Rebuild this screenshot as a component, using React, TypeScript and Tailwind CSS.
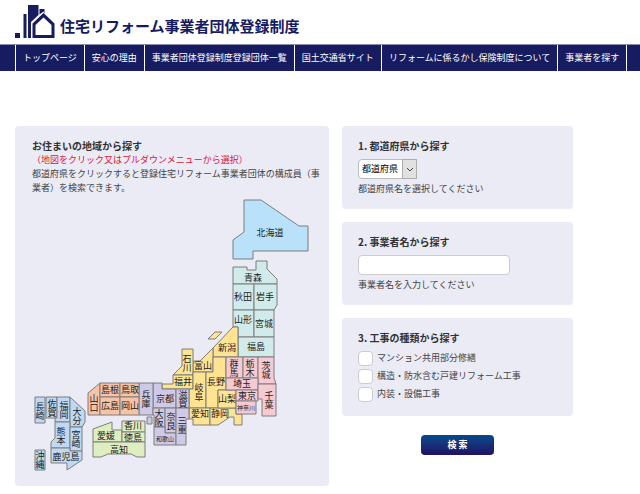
import React, { useState } from "react";

interface Prefecture {
  name: string
  points: string
  fill: string
  x: number
  y: number
  vertical?: boolean
  small?: boolean
}

const BLUE = "#b9e2fa";
const GREEN = "#d0ebea";
const YELLOW = "#fee492";
const PINK = "#f6cad3";
const PURPLE = "#cdc9e6";
const ORANGE = "#f7c3a6";
const LIME = "#dfeec0";
const SKY = "#bfd9f2";

// x, y is the middle of the label
const prefectures: Prefecture[] = [
  { name: "北海道", fill: BLUE, x: 270, y: 233, points: "244,200 261,200 299,226 308,226 308,251 253,251 253,259 233,259 233,240 244,232" },
  { name: "青森", fill: GREEN, x: 253, y: 278, points: "233,267 247,267 247,270 256,270 256,261 267,261 267,269 277,279 277,284 233,284" },
  { name: "秋田", fill: GREEN, x: 243, y: 297, points: "233,284 254,284 254,310 233,310" },
  { name: "岩手", fill: GREEN, x: 265, y: 297, points: "254,284 277,284 277,305 274,310 254,310" },
  { name: "山形", fill: GREEN, x: 243, y: 320, points: "233,310 254,310 254,337 238,337 238,327 233,327" },
  { name: "宮城", fill: GREEN, x: 264, y: 324, points: "254,310 274,310 274,337 254,337" },
  { name: "福島", fill: GREEN, x: 256, y: 347, points: "238,337 274,337 274,357 238,357" },
  { name: "", fill: YELLOW, x: 0, y: 0, points: "208,339 215,332 222,332 215,339" },
  { name: "新潟", fill: YELLOW, x: 227, y: 348, points: "233,327 238,327 238,357 213,357 213,348" },
  { name: "富山", fill: YELLOW, x: 203, y: 366, points: "213,348 200,361 193,361 193,372 213,372" },
  { name: "石川", fill: YELLOW, x: 187, y: 363, vertical: true, points: "182,349 193,349 193,375 173,375 182,366" },
  { name: "福井", fill: YELLOW, x: 183, y: 382, points: "173,375 193,375 193,389 162,389 162,384 173,384" },
  { name: "岐阜", fill: YELLOW, x: 199, y: 392, vertical: true, points: "193,372 206,372 206,408 189,408 189,389 193,389" },
  { name: "長野", fill: YELLOW, x: 216, y: 382, points: "213,357 226,357 226,390 218,390 218,408 206,408 206,372 213,372" },
  { name: "愛知", fill: YELLOW, x: 200, y: 414, points: "189,408 210,408 210,425 193,425 193,419 189,419" },
  { name: "静岡", fill: YELLOW, x: 220, y: 414, points: "210,408 236,408 236,414 242,414 242,425 234,425 234,417 230,417 218,425 210,425" },
  { name: "山梨", fill: YELLOW, x: 227, y: 399, points: "218,390 236,390 236,408 218,408" },
  { name: "群馬", fill: PINK, x: 234, y: 368, vertical: true, points: "226,357 243,357 243,378 226,378" },
  { name: "栃木", fill: PINK, x: 250, y: 368, vertical: true, points: "243,357 258,357 258,378 243,378" },
  { name: "茨城", fill: PINK, x: 266, y: 370, vertical: true, points: "258,357 274,357 274,378 276,384 258,384" },
  { name: "埼玉", fill: PINK, x: 242, y: 384, points: "226,378 258,378 258,390 226,390" },
  { name: "東京", fill: PINK, x: 247, y: 396, points: "236,390 258,390 258,401 236,401" },
  { name: "神奈川", fill: PINK, x: 246, y: 408, small: true, points: "236,401 256,401 256,414 236,414" },
  { name: "千葉", fill: PINK, x: 269, y: 400, vertical: true, points: "258,384 276,384 276,416 262,416 262,399 258,399" },
  { name: "京都", fill: PURPLE, x: 165, y: 399, points: "153,383 162,383 162,389 176,389 176,408 153,408" },
  { name: "滋賀", fill: PURPLE, x: 183, y: 399, vertical: true, points: "176,389 189,389 189,408 176,408" },
  { name: "兵庫", fill: PURPLE, x: 146, y: 399, vertical: true, points: "139,383 153,383 153,415 139,415" },
  { name: "大阪", fill: PURPLE, x: 159, y: 418, vertical: true, points: "153,408 165,408 165,427 154,427 154,415 153,415" },
  { name: "奈良", fill: PURPLE, x: 171, y: 421, vertical: true, points: "165,408 176,408 176,433 165,433" },
  { name: "和歌山", fill: PURPLE, x: 165, y: 439, small: true, points: "154,427 165,427 165,433 176,433 176,445 154,445" },
  { name: "三重", fill: PURPLE, x: 182, y: 425, vertical: true, points: "176,408 189,408 189,419 186,419 186,445 176,445" },
  { name: "", fill: PURPLE, x: 0, y: 0, points: "147,417 152,417 152,424 147,424" },
  { name: "山口", fill: ORANGE, x: 94, y: 403, vertical: true, points: "100,383 100,415 88,415 88,393" },
  { name: "島根", fill: ORANGE, x: 110, y: 390, points: "100,383 120,383 120,397 100,397" },
  { name: "鳥取", fill: ORANGE, x: 130, y: 390, points: "120,383 139,383 139,397 120,397" },
  { name: "広島", fill: ORANGE, x: 110, y: 406, points: "100,397 120,397 120,415 100,415" },
  { name: "岡山", fill: ORANGE, x: 130, y: 406, points: "120,397 139,397 139,415 120,415" },
  { name: "愛媛", fill: LIME, x: 106, y: 436, points: "93,429 112,422 112,430 122,430 122,442 93,442" },
  { name: "香川", fill: LIME, x: 133, y: 426, points: "122,421 145,421 145,432 122,432" },
  { name: "徳島", fill: LIME, x: 133, y: 438, points: "122,432 145,432 145,442 122,442" },
  { name: "高知", fill: LIME, x: 119, y: 450, points: "93,442 145,442 145,457 137,457 131,454 108,454 101,457 93,457" },
  { name: "長崎", fill: SKY, x: 40, y: 411, vertical: true, points: "35,397 45,397 45,423 35,423" },
  { name: "佐賀", fill: SKY, x: 52, y: 408, vertical: true, points: "46,397 57,397 57,418 46,418" },
  { name: "福岡", fill: SKY, x: 64, y: 410, vertical: true, points: "57,397 70,397 70,422 55,422 55,418 57,418" },
  { name: "大分", fill: SKY, x: 77, y: 416, vertical: true, points: "70,397 85,411 85,422 82,427 70,427" },
  { name: "熊本", fill: SKY, x: 61, y: 436, vertical: true, points: "55,422 70,422 70,448 51,448 51,442 55,438" },
  { name: "宮崎", fill: SKY, x: 76, y: 439, vertical: true, points: "70,427 82,427 82,451 70,451" },
  { name: "鹿児島", fill: SKY, x: 66, y: 457, points: "51,448 70,448 70,451 82,451 82,460 67,470 67,463 51,463" },
  { name: "沖縄", fill: SKY, x: 40, y: 460, vertical: true, points: "35,450 45,450 45,470 35,470" },
];

const menus = ["トップページ", "安心の理由", "事業者団体登録制度登録団体一覧", "国土交通省サイト", "リフォームに係るかし保険制度について", "事業者を探す"];

const works = ["マンション共用部分修繕", "構造・防水含む戸建リフォーム工事", "内装・設備工事"];

const Logo = () => {
  return <svg className="h-10 w-10 shrink-0" viewBox="0 0 40 40" fill="#171b5f">
    <rect x="0" y="33" width="5" height="5" />
    <rect x="8.5" y="14" width="3" height="24" />
    <path d="M13 5H23.5V15L16 22V38H13Z" />
    <path d="M24.5 9H29.5V14L28.5 11.5L24.5 14.5Z" />
    <path fillRule="evenodd" d="M28.5 13L39.5 23.5V38H17.5V23.5ZM28.5 17.5L20.5 25V35H36.5V25Z" />
  </svg>
}

const PrefectureShape = ({ pref, onPick }: { pref: Prefecture, onPick: (name: string) => void }) => {
  const shape = <polygon points={pref.points} fill={pref.fill} stroke="#7d7d7d" strokeWidth="1" />;
  if (!pref.name) {
    return shape
  }
  return <a href="#search" onClick={() => onPick(pref.name)}>
    {shape}
    {pref.vertical ? (
      <text className="[writing-mode:vertical-rl]" x={pref.x} y={pref.y} textAnchor="middle" dominantBaseline="central" fontSize="9">{pref.name}</text>
    ) : (
      <text x={pref.x} y={pref.y + (pref.small ? 2 : 3)} textAnchor="middle" fontSize={pref.small ? 6 : 9}>{pref.name}</text>
    )}
  </a>
}

const JapanMap = ({ onPick }: { onPick: (name: string) => void }) => {
  return <svg className="w-full" viewBox="32 195 280 278" fill="#222222" role="group">
    {prefectures.map((pref) => <PrefectureShape key={pref.points} pref={pref} onPick={onPick} />)}
  </svg>
}

export default function App() {
  const [area, setArea] = useState("");
  const [company, setCompany] = useState("");

  return <div className="min-h-screen overflow-x-hidden bg-white text-[9px] leading-[14px] text-[#444444] font-['Noto_Sans_CJK_JP',sans-serif]">
    <header className="flex h-11 items-start gap-[5px] pl-[15px]">
      <Logo />
      <h1 className="pt-3 text-[15px] font-bold leading-7 whitespace-nowrap text-[#171b5f]">住宅リフォーム事業者団体登録制度</h1>
    </header>
    <nav className="flex h-[27px] border-t border-[#8a8cb0] bg-[#171b5f] pl-[15px] whitespace-nowrap text-white">
      {menus.map((menu) => (
        <a key={menu} href="#" className="flex items-center border-l border-white px-[7px]">{menu}</a>
      ))}
      <span className="border-l border-white"></span>
    </nav>

    <form className="grid grid-cols-[314fr_231fr] items-start gap-[13px] pt-[55px] pr-[67px] pl-[15px]" onSubmit={(e) => e.preventDefault()}>
      <section className="min-w-0 rounded bg-[#ebebf6] py-[13px] pr-2 pl-[17px]">
        <h2 className="text-[10px] font-bold leading-[14px] text-[#333333]">お住まいの地域から探す</h2>
        <p className="text-[#dc143c]">（地図をクリック又はプルダウンメニューから選択）</p>
        <p>都道府県をクリックすると登録住宅リフォーム事業者団体の構成員（事業者）を検索できます。</p>
        <div className="pr-[9px]">
          <JapanMap onPick={setArea} />
        </div>
      </section>

      <div id="search" className="flex min-w-0 flex-col gap-[13px]">
        <section className="rounded bg-[#ebebf6] px-4 py-[13px]">
          <h2 className="text-[10px] font-bold leading-[14px] text-[#333333]">1. 都道府県から探す</h2>
          <div className="relative mt-[6px] w-[59px]">
            <select id="area" value={area} onChange={(e) => setArea(e.target.value)} className="block h-5 w-full appearance-none rounded-sm border border-[#bbbbbb] bg-white pl-[3px] text-[9px] text-black">
              <option value="">都道府県</option>
              {prefectures.filter((p) => p.name).map((p) => <option key={p.name} value={p.name}>{p.name}</option>)}
            </select>
            <span className="pointer-events-none absolute top-0 right-0 flex h-5 w-[15px] items-center justify-center border border-[#adadad] bg-[#e1e1e1]">
              <svg className="w-2" viewBox="0 0 8 5" fill="none" stroke="#444444"><path d="M1 1L4 4L7 1" /></svg>
            </span>
          </div>
          <label htmlFor="area" className="mt-[3px] block">都道府県名を選択してください</label>
        </section>

        <section className="rounded bg-[#ebebf6] px-4 py-[13px]">
          <h2 className="text-[10px] font-bold leading-[14px] text-[#333333]">2. 事業者名から探す</h2>
          <input id="company" type="text" value={company} onChange={(e) => setCompany(e.target.value)} className="mt-[6px] block h-5 w-[152px] rounded-sm border border-[#cccccc] bg-white px-1" />
          <label htmlFor="company" className="mt-[3px] block">事業者名を入力してください</label>
        </section>

        <section className="rounded bg-[#ebebf6] px-4 py-[13px]">
          <h2 className="mb-1 text-[10px] font-bold leading-[14px] text-[#333333]">3. 工事の種類から探す</h2>
          {works.map((work) => (
            <label key={work} className="flex h-[18px] items-center gap-1">
              <input type="checkbox" className="h-[15px] w-[15px] appearance-none rounded-sm border border-[#cccccc] bg-white checked:bg-[#171b5f]" />
              {work}
            </label>
          ))}
        </section>

        <button type="submit" className="mt-[6px] h-5 w-[73px] self-center rounded-sm border-b border-[#2a1260] bg-linear-to-b from-[#004b8d] to-[#1b1464] font-bold text-white">検 索</button>
      </div>
    </form>
  </div>
}
